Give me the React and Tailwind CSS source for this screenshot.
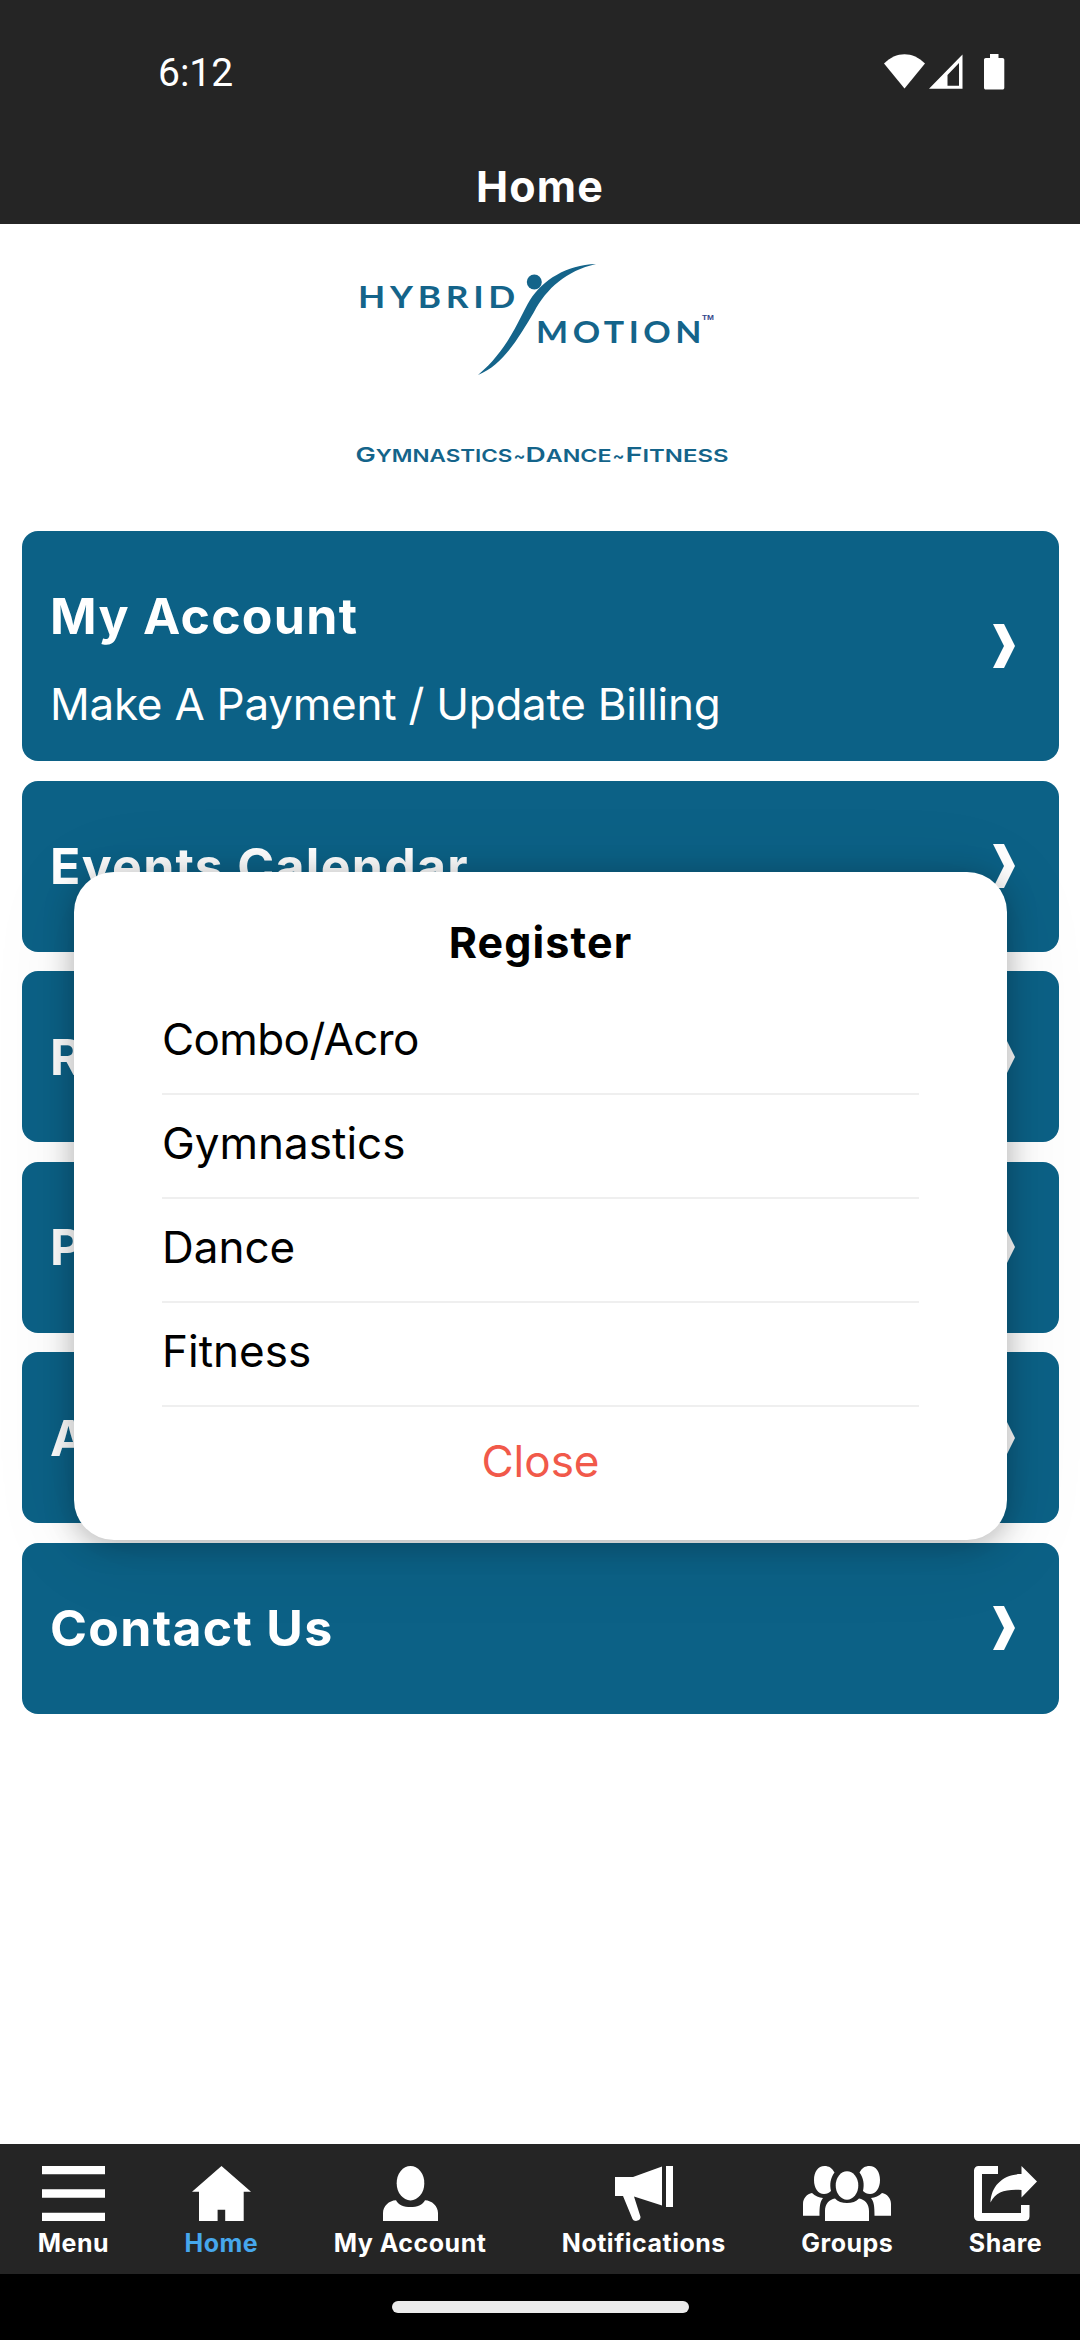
const cards = [
  { title: "My Account", text: "Make A Payment / Update Billing" },
  { title: "Events Calendar" },
  { title: "Register" },
  { title: "Parent Portal" },
  { title: "About Us" },
  { title: "Contact Us" },
];

const options = [
  { name: "Combo/Acro", className: "tracking-[-0.6px]" },
  { name: "Gymnastics" },
  { name: "Dance" },
  { name: "Fitness" },
];

const tabs = [
  { label: "Menu", Icon: MenuIcon },
  { label: "Home", Icon: HomeIcon, active: true },
  { label: "My Account", Icon: AccountIcon },
  { label: "Notifications", Icon: HornIcon },
  { label: "Groups", Icon: GroupsIcon },
  { label: "Share", Icon: ShareIcon },
];

function MenuIcon() {
  return (
    <svg width="63" height="55" viewBox="0 0 63 55" fill="currentColor">
      <path d="M0 0h63v8.3H0zM0 23.3h63v8.4H0zM0 46.7h63V55H0z" />
    </svg>
  );
}

function HomeIcon() {
  return (
    <svg width="59" height="55" viewBox="0 0 59 55" fill="currentColor">
      <path d="M29.5 0 59 25.7h-7.3V55H33.2V43.7h-7.6V55H7V25.7H0z" />
    </svg>
  );
}

function AccountIcon() {
  return (
    <svg width="55" height="55" viewBox="0 0 55 55" fill="currentColor">
      <ellipse cx="27.5" cy="17.2" rx="13.8" ry="17.2" />
      <path d="M0 55V47C0 40 6 34.5 13 34.2c4 9.2 25 9.2 29 0C49 34.5 55 40 55 47v8z" />
    </svg>
  );
}

function HornIcon() {
  return (
    <svg width="58" height="55" viewBox="0 0 58 55" fill="currentColor">
      <path d="M0 11h18L47 .6V39.5L19 30.5 25.4 50.5C26.5 55 19 56.500 17.5 53L8 30H0zM51 0h7v41h-7z" />
    </svg>
  );
}

function GroupsIcon() {
  return (
    <svg width="88" height="55" viewBox="0 0 88 55" fill="currentColor">
      <ellipse cx="44" cy="19.5" rx="11.3" ry="14.2" />
      <path d="M22 55V45c0-7 4-11.5 10-12.5 5 6 19 6 24 0 6 1 10 5.5 10 12.5v10z" />
      <path d="M31.5 6.5C29 2 26 0 21.5 0 15 0 11 6 11 14s4 14 10 14c3 0 5-1 7-3-1.5-7-.5-13 3.5-18.5z" />
      <path d="M56.5 6.5C59 2 62 0 66.5 0 73 0 77 6 77 14s-4 14-10 14c-3 0-5-1-7-3 1.5-7 .5-13-3.5-18.5z" />
      <path d="M0 49.7V38c0-6 4-10 9-11 3 3 7 4.5 11 5-3 4-3.5 8-3.5 17.7z" />
      <path d="M88 49.7V38c0-6-4-10-9-11-3 3-7 4.5-11 5 3 4 3.5 8 3.5 17.7z" />
    </svg>
  );
}

function ShareIcon() {
  return (
    <svg width="63" height="55" viewBox="0 0 63 55" fill="currentColor">
      <path d="M24 0v8H8v39h39v-8h8.5v11.5c0 3-2 4.5-4.5 4.5H4.5C2 55 0 53 0 50.5v-46C0 2 2 0 4.5 0z" />
      <path d="M47.5 0 63 15.5 47.5 31.5V24C31 23 22 26 16.5 36.5 17 20 29 8 47.5 8z" />
    </svg>
  );
}

function Chevron() {
  return (
    <svg width="22" height="44" viewBox="0 0 22 44" fill="currentColor">
      <path d="M0 0h11l11 22-11 22H0l11-22z" />
    </svg>
  );
}

function StatusIcons() {
  return (
    <svg width="122" height="37" viewBox="0 0 122 37" fill="#fff">
      <path d="M0 9.5C12-3 29-3 41 9.5L20.5 34.5z" />
      <path
        fillRule="evenodd"
        d="M45 34.7 78.5.5v34.2zM63.5 21v10.700h11.500V9z"
      />
      <path d="M106 0h8.5v4h4c1 0 1.8.8 1.8 1.8v28c0 1-.8 1.8-1.8 1.8h-16.700c-1 0-1.800-.8-1.800-1.800v-28c0-1 .8-1.8 1.8-1.8h4.2z" />
    </svg>
  );
}

function Logo() {
  return (
    <svg width="420" height="240" viewBox="0 0 420 240" fill="#14648a">
      <g className="font-['Lato'] font-bold" fontSize="30" letterSpacing="4">
        <text x="27" y="68.3" textLength="162" lengthAdjust="spacingAndGlyphs">HYBRID</text>
        <text x="205" y="102.8" textLength="170" lengthAdjust="spacingAndGlyphs">MOTION</text>
      </g>
      <text x="371" y="79.5" fontSize="8" fill="#34488c" className="font-['Liberation_Sans'] font-bold" textLength="12" lengthAdjust="spacingAndGlyphs">TM</text>
      <circle cx="203.3" cy="42" r="7.5" />
      <path d="M265 24C235 25 212 40 199 60 188 78 178 109 147 135 173 124 188 97 203 72 216 48 235 31 265 24z" />
      <g className="font-['Inter'] font-semibold" fontSize="17">
        <text x="24.5" y="222.3" textLength="157" lengthAdjust="spacingAndGlyphs"><tspan fontSize="20.5">G</tspan>YMNASTICS</text>
        <text x="182.5" y="222.3" textLength="12" lengthAdjust="spacingAndGlyphs">~</text>
        <text x="194.5" y="222.3" textLength="86" lengthAdjust="spacingAndGlyphs"><tspan fontSize="20.5">D</tspan>ANCE</text>
        <text x="281.5" y="222.3" textLength="12" lengthAdjust="spacingAndGlyphs">~</text>
        <text x="294.5" y="222.3" textLength="103" lengthAdjust="spacingAndGlyphs"><tspan fontSize="20.5">F</tspan>ITNESS</text>
      </g>
    </svg>
  );
}

function Card({ title, text }) {
  return (
    <div
      className={`flex items-center justify-between rounded-2xl bg-[#0c6186] pl-7 pr-11 text-white ${
        text ? "h-[230px]" : "h-[171px]"
      }`}
    >
      <div className={text ? "pt-7" : ""}>
        <h2 className="text-[50px] leading-[60px] font-bold tracking-[1.3px]">
          {title}
        </h2>
        {text && (
          <p className="mt-7 text-[44px] leading-[60px] tracking-[-0.25px]">{text}</p>
        )}
      </div>
      <Chevron />
    </div>
  );
}

function RegisterModal() {
  return (
    <div className="absolute top-[872px] left-[74px] flex h-[668px] w-[933px] flex-col rounded-[40px] bg-white px-[88px] text-[44px] text-black shadow-[0_4px_30px_rgba(0,0,0,0.28),0_10px_90px_rgba(0,0,0,0.08)]">
      <h3 className="mt-10 text-center text-[43px] leading-[60px] font-bold tracking-[1.1px]">
        Register
      </h3>
      <ul className="mt-[19px]">
        {options.map(({ name, className = "" }) => (
          <li
            key={name}
            className={`flex h-[104px] items-center border-b-2 border-[#efefef] pb-1.5 ${className}`}
          >
            {name}
          </li>
        ))}
      </ul>
      <button className="mt-6 leading-[60px] text-[#f1594a]">Close</button>
    </div>
  );
}

export default function App() {
  return (
    <div className="relative flex h-[2340px] w-[1080px] flex-col overflow-hidden bg-white font-['Inter',sans-serif]">
      <header className="h-[224px] shrink-0 bg-[#252525] text-white">
        <div className="flex h-36 items-center justify-between pl-[158px] pr-[74px]">
          <span className="pt-0.5 font-['Roboto',sans-serif] text-[39px]">6:12</span>
          <StatusIcons />
        </div>
        <h1 className="pt-3 text-center text-[43px] leading-[60px] font-bold tracking-[1.1px]">
          Home
        </h1>
      </header>
      <main className="flex-1 pl-[22px] pr-[21px]">
        <div className="flex justify-center pt-4 pb-[51px]">
          <Logo />
        </div>
        <div className="flex flex-col gap-[19.5px]">
          {cards.map((card) => (
            <Card key={card.title} title={card.title} text={card.text} />
          ))}
        </div>
      </main>
      <nav className="flex h-[130px] shrink-0 justify-around bg-[#252525] pt-[22px]">
        {tabs.map(({ label, Icon, active }) => (
          <div key={label} className="flex flex-col items-center text-white">
            <Icon />
            <span
              className={`mt-[7px] text-[25px] leading-[30px] font-bold tracking-[0.5px] ${
                active ? "text-[#46a7ec]" : ""
              }`}
            >
              {label}
            </span>
          </div>
        ))}
      </nav>
      <div className="flex h-[66px] shrink-0 items-center justify-center bg-black">
        <div className="h-3 w-[297px] rounded-full bg-[#ebebeb]" />
      </div>
      <RegisterModal />
    </div>
  );
}
